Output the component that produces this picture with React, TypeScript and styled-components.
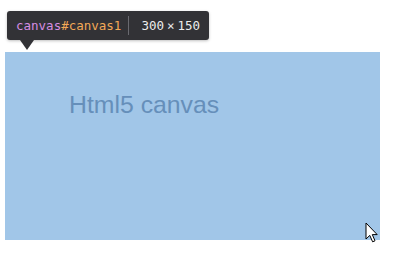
import React from "react";
import styled, { createGlobalStyle } from "styled-components";

const Global = createGlobalStyle`
  html, body { margin: 0; padding: 0; background: #ffffff; }
  body { width: 411px; height: 273px; overflow: hidden; font-family: "Liberation Sans", Arial, sans-serif; }
`;

const Page = styled.div`
  position: relative;
  width: 411px;
  height: 273px;
  padding: 52px 0 0 5px;
  box-sizing: border-box;
`;

const CanvasBox = styled.div`
  width: 375px;
  height: 188px;
  background: #a1c6e8;
  display: flex;
  align-items: flex-start;
  padding: 41px 0 0 64px;
  box-sizing: border-box;
`;

const CanvasText = styled.span`
  font-family: "Liberation Sans", Arial, sans-serif;
  font-size: 24.8px;
  line-height: 24px;
  color: #668fba;
`;

const Tooltip = styled.div`
  position: absolute;
  left: 7px;
  top: 11px;
  width: 202px;
  height: 29px;
  box-sizing: border-box;
  background: #323236;
  border-radius: 3px;
  box-shadow: 0 1px 3px rgba(0, 0, 0, 0.25);
  display: flex;
  align-items: center;
  padding: 0 0 0 9px;
  font-family: "DejaVu Sans Mono", "Liberation Mono", monospace;
  font-size: 12.5px;
  white-space: nowrap;

  &::after {
    content: "";
    position: absolute;
    left: 13px;
    top: 29px;
    border-left: 7px solid transparent;
    border-right: 7px solid transparent;
    border-top: 10px solid #323236;
  }
`;

const Tag = styled.span<{ $kind: "tag" | "id" }>`
  color: ${(p) => (p.$kind === "tag" ? "#d68de2" : "#f2a957")};
`;

const Divider = styled.span`
  width: 1px;
  height: 19px;
  background: #6a6a70;
  margin: 0 12px 0 7px;
`;

const Size = styled.span`
  color: #ececec;
`;

const Times = styled.span`
  margin: 0 3px;
`;

const Cursor = styled.svg`
  position: absolute;
  left: 365px;
  top: 222px;
`;

export default function App() {
  return (
    <>
      <Global />
      <Page>
        <CanvasBox>
          <CanvasText>Html5 canvas</CanvasText>
        </CanvasBox>
        <Tooltip>
          <Tag $kind="tag">canvas</Tag>
          <Tag $kind="id">#canvas1</Tag>
          <Divider />
          <Size>
            300<Times>×</Times>150
          </Size>
        </Tooltip>
        <Cursor width="14" height="22" viewBox="0 0 14 22">
          <path
            d="M1 1 L1 17 L4.8 13.4 L7.6 19.8 L10 18.8 L7.3 12.6 L12.2 12.6 Z"
            fill="#ffffff"
            stroke="#000000"
            strokeWidth="1"
            strokeLinejoin="round"
          />
        </Cursor>
      </Page>
    </>
  );
}
